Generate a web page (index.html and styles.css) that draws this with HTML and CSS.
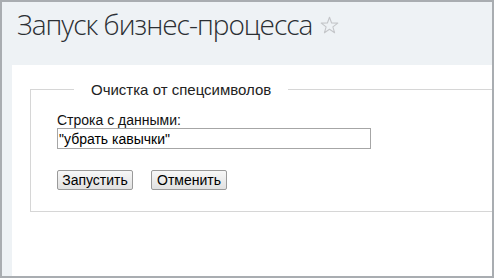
FILE: index.html
```html
<!DOCTYPE html>
<html lang="ru">
<head>
  <meta charset="UTF-8">
  <meta name="viewport" content="width=device-width, initial-scale=1.0">
  <title>Запуск бизнес-процесса</title>
  <link rel="stylesheet" href="styles.css">
</head>
<body>
  <div class="page">
    <h1 class="page-title">
      Запуск бизнес-процесса
      <svg class="star" width="19" height="18" viewBox="0 0 19 18">
        <path d="M9.5 1.2 L11.6 7 L17.8 7.1 L12.9 10.9 L14.6 16.8 L9.5 13.3 L4.4 16.8 L6.1 10.9 L1.2 7.1 L7.4 7 Z" fill="none" stroke="#c4c6c9" stroke-width="1.1" stroke-linejoin="round"/>
      </svg>
    </h1>

    <div class="panel">
      <form class="bp-form">
        <fieldset>
          <legend>Очистка от спецсимволов</legend>
          <label for="data">Строка с данными:</label>
          <input type="text" id="data" value="&quot;убрать кавычки&quot;">
          <div class="buttons">
            <button type="submit">Запустить</button>
            <button type="button">Отменить</button>
          </div>
        </fieldset>
      </form>
    </div>
  </div>
</body>
</html>
```

FILE: styles.css
```css
/* General */
html, body {
  margin: 0;
  padding: 0;
  height: 100%;
}

body {
  font-family: Arial, "Liberation Sans", sans-serif;
  font-size: 13px;
  color: #000;
}

.page {
  box-sizing: border-box;
  height: 278px;
  width: 494px;
  border: 2px solid #a9adb1;
  background: #eef2f5;
  display: flex;
  flex-direction: column;
  overflow: hidden;
}

/* Title */
.page-title {
  margin: 3px 0 22px 15px;
  font-family: "Open Sans", sans-serif;
  font-weight: 300;
  font-size: 28px;
  line-height: 38px;
  letter-spacing: -1px;
  color: #2b2f33;
  display: flex;
  align-items: center;
  gap: 8px;
  white-space: nowrap;
}

.star {
  margin-top: 2px;
}

/* Panel */
.panel {
  flex: 1;
  margin-left: 10px;
  background: #fff;
  padding: 16px 0 0 18px;
  overflow: hidden;
}

fieldset {
  margin: 0 -20px 0 0;
  padding: 14px 0 21px 26px;
  border: 1px solid #d6d6d6;
  border-right: none;
}

legend {
  margin-left: 17px;
  padding: 0 17px;
  font-size: 15px;
  line-height: 17px;
  color: #222;
}

label {
  display: block;
  font-size: 14px;
  line-height: 16px;
  color: #111;
}

input[type="text"] {
  box-sizing: border-box;
  display: block;
  width: 314px;
  height: 21px;
  margin: 0;
  padding: 0 1px;
  border: 1px solid #a6a6a6;
  font-family: Arial, "Liberation Sans", sans-serif;
  font-size: 14px;
  color: #000;
  outline: none;
}

.buttons {
  display: flex;
  gap: 18px;
  margin-top: 21px;
}

.buttons button {
  box-sizing: border-box;
  width: 76px;
  height: 20px;
  padding: 0;
  border: 1px solid #9a9a9a;
  border-radius: 2px;
  background: linear-gradient(#f7f7f7, #e1e1e1);
  font-family: Arial, "Liberation Sans", sans-serif;
  font-size: 14px;
  color: #000;
  cursor: pointer;
}
```
